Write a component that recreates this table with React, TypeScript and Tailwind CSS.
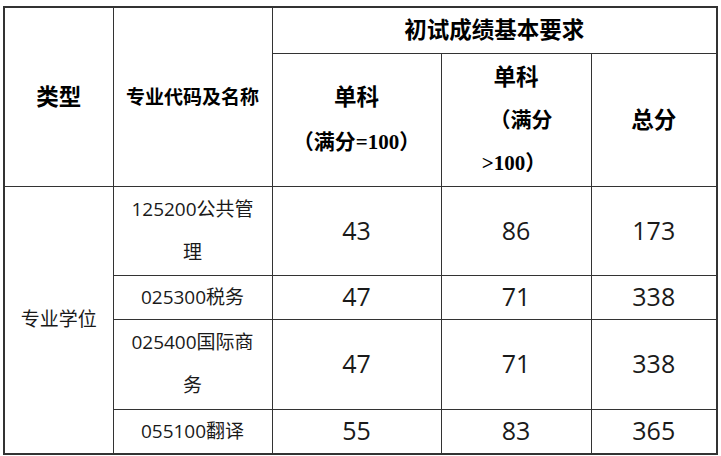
import React from 'react';

const cjk = { fontFamily: '"Open Sans", "Noto Sans CJK SC", sans-serif' };
const serif = { fontFamily: '"Liberation Serif", serif' };

const rows = [
  { name: ['125200公共管', '理'], a: '43', b: '86', c: '173', h: 'h-[89px]' },
  { name: ['025300税务'], a: '47', b: '71', c: '338', h: 'h-[44px]' },
  { name: ['025400国际商', '务'], a: '47', b: '71', c: '338', h: 'h-[90px]' },
  { name: ['055100翻译'], a: '55', b: '83', c: '365', h: 'h-[44px]' },
];

const cell = 'border border-[#333] p-0 text-center align-middle';

export default function App() {
  return (
    <div className="w-[721px] h-[456px] bg-white pl-[3px] pt-[6px]" style={cjk}>
      <table className="border-collapse table-fixed w-[713px] border-2 border-[#333] text-[#1a1a1a]">
        <colgroup>
          <col className="w-[109px]" />
          <col className="w-[159px]" />
          <col className="w-[169px]" />
          <col className="w-[150px]" />
          <col className="w-[126px]" />
        </colgroup>
        <tbody>
          <tr className="h-[46px]">
            <td rowSpan={2} className={`${cell} text-[22.5px] font-bold text-black`}>类型</td>
            <td rowSpan={2} className={`${cell} text-[19px] font-bold text-black`}>专业代码及名称</td>
            <td colSpan={3} className={`${cell} text-[22.5px] font-bold text-black`}>初试成绩基本要求</td>
          </tr>
          <tr className="h-[133px]">
            <td className={`${cell} font-bold text-black leading-[44px]`}>
              <div className="text-[22.5px]">单科</div>
              <div className="text-[21px]">
                （满分<span style={serif}>=100</span>）
              </div>
            </td>
            <td className={`${cell} font-bold text-black leading-[43px]`}>
              <div className="text-[22.5px]">单科</div>
              <div className="text-[21px] pl-[10px]">（满分</div>
              <div className="text-[21px] pr-[4px]">
                <span style={serif}>&gt;100</span>）
              </div>
            </td>
            <td className={`${cell} text-[22.5px] font-bold text-black`}>总分</td>
          </tr>
          {rows.map((r, i) => (
            <tr key={i} className={r.h}>
              {i === 0 && (
                <td rowSpan={4} className={`${cell} text-[19px]`}>专业学位</td>
              )}
              <td className={`${cell} text-[19px] leading-[43px]`}>
                {r.name.map((n, j) => (
                  <div key={j}>{n}</div>
                ))}
              </td>
              <td className={`${cell} text-[25px]`}>{r.a}</td>
              <td className={`${cell} text-[25px]`}>{r.b}</td>
              <td className={`${cell} text-[25px]`}>{r.c}</td>
            </tr>
          ))}
        </tbody>
      </table>
    </div>
  );
}
